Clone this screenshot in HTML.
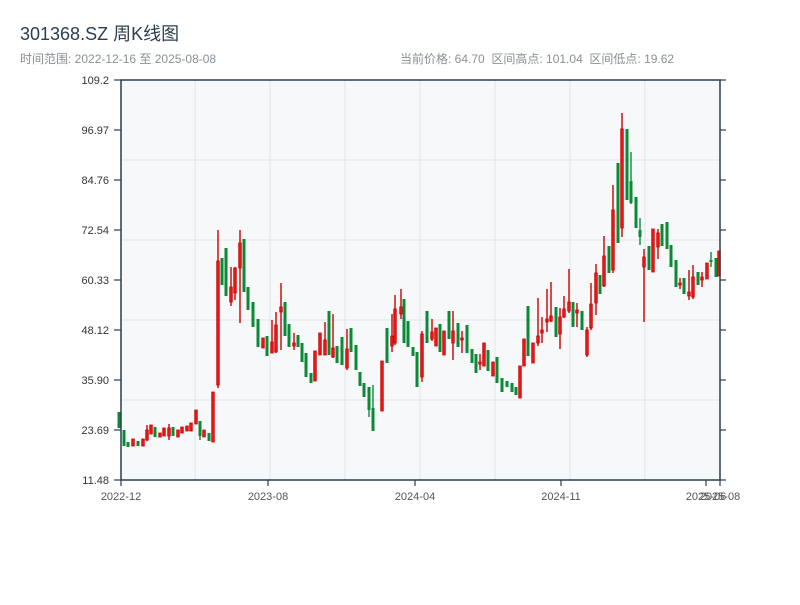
<!DOCTYPE html>
<html><head><meta charset="utf-8"><style>
body{margin:0;background:#fff;width:800px;height:600px;overflow:hidden;font-family:"Liberation Sans","Noto Sans CJK SC",sans-serif}
</style></head><body>
<svg id="s" width="800" height="600" xmlns="http://www.w3.org/2000/svg" font-family="Liberation Sans, Noto Sans CJK SC, sans-serif">
<text x="20" y="40" font-size="18" fill="#2c3e50">301368.SZ 周K线图</text>
<text x="20" y="63" font-size="12" fill="#8a8f96">时间范围: 2022-12-16 至 2025-08-08</text>
<text x="400" y="63" font-size="12" fill="#8a8f96" xml:space="preserve">当前价格: 64.70  区间高点: 101.04  区间低点: 19.62</text>
<rect x="121" y="80" width="599" height="400" fill="#f7f8fa"/>
<g stroke="#e1e4e9" stroke-width="1">
<line x1="121" y1="160" x2="720" y2="160"/><line x1="121" y1="240" x2="720" y2="240"/>
<line x1="121" y1="320" x2="720" y2="320"/><line x1="121" y1="400" x2="720" y2="400"/>
<line x1="195" y1="80" x2="195" y2="480"/><line x1="270" y1="80" x2="270" y2="480"/>
<line x1="345" y1="80" x2="345" y2="480"/><line x1="420" y1="80" x2="420" y2="480"/>
<line x1="495" y1="80" x2="495" y2="480"/><line x1="570" y1="80" x2="570" y2="480"/>
<line x1="645" y1="80" x2="645" y2="480"/>
</g>
<g id="c"></g>
<rect x="121" y="80" width="599" height="400" fill="none" stroke="#2c3e50" stroke-width="1.5"/>
<g stroke="#2c3e50" stroke-width="1.2" id="ticks"></g>
<g font-size="11" fill="#333" text-anchor="end" id="yl"></g>
<g font-size="11" fill="#555" text-anchor="middle">
<text x="121" y="500">2022-12</text><text x="268" y="500">2023-08</text>
<text x="415" y="500">2024-04</text><text x="561" y="500">2024-11</text>
<text x="706" y="500">2025-06</text><text x="720" y="500">2025-08</text>
</g>
</svg>
<script>
var NS="http://www.w3.org/2000/svg";
function el(p,t,a){var e=document.createElementNS(NS,t);for(var k in a)e.setAttribute(k,a[k]);p.appendChild(e);return e;}
var T=document.getElementById('ticks'),Y=document.getElementById('yl');
var labs=["109.2","96.97","84.76","72.54","60.33","48.12","35.90","23.69","11.48"];
for(var i=0;i<9;i++){var y=80+i*50;el(T,'line',{x1:114,y1:y,x2:121,y2:y});el(T,'line',{x1:720,y1:y,x2:726,y2:y});
var t=el(Y,'text',{x:109,y:y+4});t.textContent=labs[i];}
[121,268,415,561,706,720].forEach(function(x){el(T,'line',{x1:x,y1:480,x2:x,y2:486});});
var d=[
[119,412,428,0,0,'g'],[124,430,446,0,0,'g'],[128,442,447,0,0,'g'],[133,439,446,0,0,'r'],[138,441,446,0,0,'g'],
[143,439,446,0,0,'r'],[147,425,441,430,440,'r'],[151,425,434,0,0,'r'],[155,427,437,0,0,'g'],[160,433,437,0,0,'r'],
[164,428,436,0,0,'r'],[169,424,440,428,436,'r'],[173,427,436,0,0,'g'],[178,430,437,0,0,'r'],[182,427,433,0,0,'r'],
[187,426,431,0,0,'r'],[191,423,431,0,0,'r'],[196,410,424,0,0,'r'],[200,421,440,421,436,'g'],[204,430,437,0,0,'r'],
[209,433,441,0,0,'g'],[213,392,442,0,0,'r'],[218,230,388,261,385,'r'],[222,258,285,0,0,'g'],[226,248,296,0,0,'g'],
[231,267,306,287,302,'r'],[235,267,300,268,293,'r'],[240,230,323,243,268,'r'],[244,239,292,0,0,'g'],[248,287,310,0,0,'g'],
[253,302,327,0,0,'g'],[258,319,347,0,0,'g'],[263,338,348,0,0,'r'],[267,336,356,0,0,'g'],[272,320,353,342,353,'r'],
[276,312,353,325,352,'r'],[281,283,350,307,312,'r'],[285,302,336,0,0,'g'],[289,324,347,0,0,'g'],[294,333,350,343,346,'r'],
[298,335,347,0,0,'g'],[302,343,362,0,0,'g'],[306,353,377,0,0,'g'],[311,373,383,0,0,'g'],[315,351,381,0,0,'r'],
[320,333,355,0,0,'r'],[325,322,355,340,355,'r'],[329,311,355,0,0,'g'],[333,314,358,348,357,'r'],[337,346,363,0,0,'g'],
[342,337,365,0,0,'g'],[347,329,370,349,368,'r'],[351,328,352,0,0,'g'],[356,345,370,0,0,'g'],[360,372,386,0,0,'g'],
[364,383,397,0,0,'g'],[369,387,417,387,410,'g'],[373,385,431,408,431,'g'],
[382,361,411,0,0,'r'],[387,328,363,0,0,'g'],[392,314,352,336,346,'r'],[395,295,345,309,343,'r'],[401,289,319,307,314,'r'],
[404,299,343,0,0,'g'],[408,321,347,0,0,'g'],[413,347,356,0,0,'g'],[417,352,387,0,0,'g'],[422,331,382,334,377,'r'],
[427,311,343,0,0,'g'],[432,319,341,332,339,'r'],[436,328,346,0,0,'r'],[440,324,352,0,0,'g'],[444,331,355,0,0,'r'],
[449,311,339,0,0,'g'],[453,311,360,331,343,'r'],[458,323,347,0,0,'g'],[462,331,353,338,340,'r'],[467,325,353,0,0,'g'],
[472,349,363,0,0,'g'],[476,354,373,0,0,'g'],[480,354,370,362,364,'r'],[484,343,366,0,0,'r'],[488,350,371,0,0,'g'],
[493,362,376,0,0,'r'],[497,357,383,0,0,'g'],[502,378,392,0,0,'g'],[507,381,387,0,0,'g'],[512,383,392,0,0,'g'],
[516,387,395,0,0,'g'],[520,366,398,0,0,'r'],[524,339,366,0,0,'r'],[528,306,356,0,0,'g'],[533,343,363,0,0,'r'],
[538,298,346,336,343,'r'],[542,317,343,330,333,'r'],[547,289,332,319,322,'r'],[551,282,322,316,321,'r'],[556,307,337,0,0,'g'],
[560,308,349,317,334,'r'],[564,296,318,309,317,'r'],[569,269,313,302,311,'r'],[573,302,327,0,0,'g'],[577,303,327,310,313,'r'],
[582,311,330,0,0,'g'],[587,327,357,330,355,'r'],[591,283,330,304,328,'r'],[596,264,315,273,303,'r'],[600,275,294,0,0,'g'],
[604,236,287,256,286,'r'],[609,246,273,0,0,'g'],[613,185,273,210,270,'r'],[618,163,243,0,0,'g'],[622,113,237,129,228,'r'],
[627,129,200,0,0,'g'],[631,152,204,181,203,'g'],[636,197,228,0,0,'g'],[640,218,245,230,237,'g'],[644,249,322,257,267,'r'],
[649,246,270,0,0,'g'],[653,229,272,0,0,'r'],[658,229,259,233,247,'r'],[662,224,246,0,0,'g'],[667,222,249,0,0,'g'],
[671,245,267,0,0,'g'],[676,260,287,0,0,'g'],[680,278,289,283,285,'r'],[684,278,294,0,0,'g'],[689,270,300,292,296,'r'],
[693,265,299,277,297,'r'],[698,272,285,0,0,'g'],[702,272,287,277,280,'r'],[707,263,279,0,0,'r'],[711,252,267,260,262,'g'],
[716,258,277,0,0,'g'],[719,251,276,0,0,'r']];
var C=document.getElementById('c');
d.forEach(function(a){var x=a[0],hi=a[1],lo=a[2],bt=a[3]||hi,bb=a[4]||lo,r=a[5]=='r';
var col=r?'#cc0000':'#0b8a35';
el(C,'line',{x1:x,y1:hi,x2:x,y2:lo,stroke:col,'stroke-width':1.4});
var h=Math.max(bb-bt,2);
if(r)el(C,'rect',{x:x-1.3,y:bt,width:2.6,height:h,fill:'#e81818',stroke:'#cc0000','stroke-width':0.8});
else el(C,'rect',{x:x-1.5,y:bt,width:3,height:h,fill:'#0b8a35'});});
</script>
</body></html>
